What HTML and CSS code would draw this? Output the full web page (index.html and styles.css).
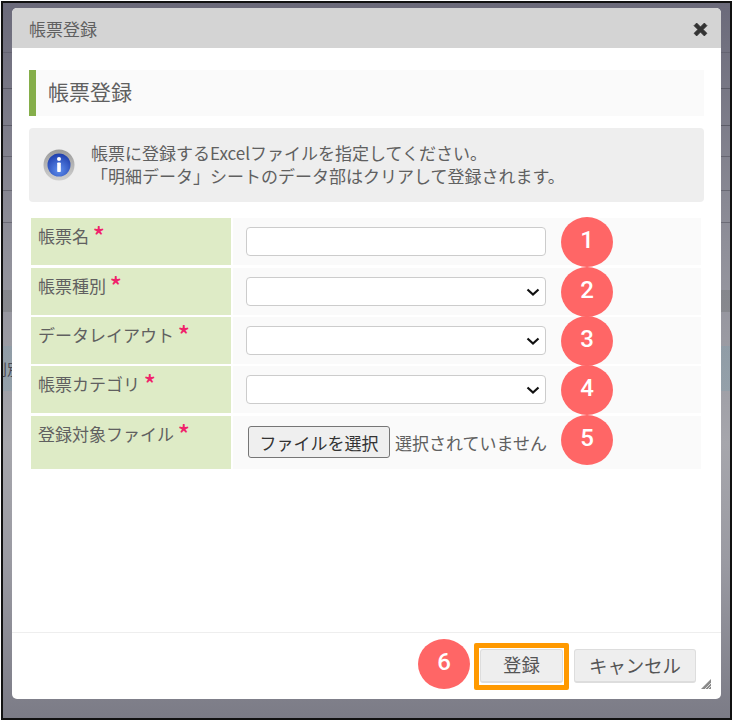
FILE: index.html
```html
<!DOCTYPE html>
<html lang="ja">
<head>
<meta charset="utf-8">
<title>帳票登録</title>
<link rel="stylesheet" href="styles.css">
</head>
<body>
<div class="frame">
  <div class="backdrop"><span class="backdrop-text">判別登録</span></div>

  <div class="dialog">
    <div class="dialog-title">
      <span>帳票登録</span>
      <svg class="close-icon" width="15" height="15" viewBox="0 0 14 14"><path d="M1 3.4 3.4 1 7 4.6 10.6 1 13 3.4 9.4 7 13 10.6 10.6 13 7 9.4 3.4 13 1 10.6 4.6 7z" fill="#333" stroke="#333" stroke-width=".8" stroke-linejoin="round"/></svg>
    </div>

    <div class="dialog-body">
      <h2 class="heading">帳票登録</h2>

      <div class="info">
        <svg class="info-icon" width="32" height="32" viewBox="0 0 32 32">
          <defs>
            <radialGradient id="blue" cx="50%" cy="72%" r="70%">
              <stop offset="0" stop-color="#5f8fee"/>
              <stop offset="1" stop-color="#1f3fae"/>
            </radialGradient>
            <linearGradient id="ring" x1="0" y1="0" x2="0" y2="1">
              <stop offset="0" stop-color="#9a9a9a"/>
              <stop offset="1" stop-color="#d0d0d0"/>
            </linearGradient>
          </defs>
          <circle cx="16" cy="16" r="15.5" fill="url(#ring)"/>
          <circle cx="16" cy="16" r="11.5" fill="url(#blue)"/>
          <circle cx="16" cy="10" r="2" fill="#fff"/>
          <rect x="14.2" y="13.5" width="3.6" height="9.5" rx=".8" fill="#fff"/>
        </svg>
        <p class="info-text">帳票に登録するExcelファイルを指定してください。<br>「明細データ」シートのデータ部はクリアして登録されます。</p>
      </div>

      <div class="form-grid">
        <div class="label">帳票名 <span class="req">*</span></div>
        <div class="value">
          <input type="text" class="field">
          <span class="badge">1</span>
        </div>

        <div class="label">帳票種別 <span class="req">*</span></div>
        <div class="value">
          <div class="select-wrap">
            <select class="field"></select>
            <svg class="chevron" width="14" height="8" viewBox="0 0 14 8"><path d="M1.5 1.5 7 6.5 12.5 1.5" fill="none" stroke="#111" stroke-width="2.2"/></svg>
          </div>
          <span class="badge">2</span>
        </div>

        <div class="label">データレイアウト <span class="req">*</span></div>
        <div class="value">
          <div class="select-wrap">
            <select class="field"></select>
            <svg class="chevron" width="14" height="8" viewBox="0 0 14 8"><path d="M1.5 1.5 7 6.5 12.5 1.5" fill="none" stroke="#111" stroke-width="2.2"/></svg>
          </div>
          <span class="badge">3</span>
        </div>

        <div class="label">帳票カテゴリ <span class="req">*</span></div>
        <div class="value">
          <div class="select-wrap">
            <select class="field"></select>
            <svg class="chevron" width="14" height="8" viewBox="0 0 14 8"><path d="M1.5 1.5 7 6.5 12.5 1.5" fill="none" stroke="#111" stroke-width="2.2"/></svg>
          </div>
          <span class="badge">4</span>
        </div>

        <div class="label">登録対象ファイル <span class="req">*</span></div>
        <div class="value value-file">
          <button type="button" class="file-btn">ファイルを選択</button>
          <span class="file-name">選択されていません</span>
          <span class="badge">5</span>
        </div>
      </div>
    </div>

    <div class="dialog-footer">
      <span class="badge badge-save">6</span>
      <div class="highlight"><button type="button" class="btn btn-save">登録</button></div>
      <button type="button" class="btn btn-cancel">キャンセル</button>
      <svg class="resize-grip" width="12" height="12" viewBox="0 0 12 12"><path d="M11 1V11H1z" fill="#8a8a8a"/><path d="M5 11 11 5M8 11 11 8" stroke="#fff" stroke-width=".7"/></svg>
    </div>
  </div>
</div>
</body>
</html>
```

FILE: styles.css
```css
* { box-sizing: border-box; }

html, body { margin: 0; height: 721px; overflow: hidden; }

body {
  padding: 1px 0 0 1px;
  background: #fff;
  font-family: "Noto Sans CJK JP", "Noto Sans", sans-serif;
  font-size: 17px;
  color: #606060;
}

.frame {
  position: relative;
  width: 731px;
  height: 719px;
  border: 2px solid #111;
  overflow: hidden;
}

.backdrop {
  height: 100%;
  padding-top: 355px;
  overflow: hidden;
  white-space: nowrap;
  color: #4a4a52;
  background:
    linear-gradient(to bottom,
      transparent 49px, rgba(60,60,70,.25) 49px, rgba(60,60,70,.25) 50px,
      transparent 50px, transparent 85px, rgba(60,60,70,.5) 85px, rgba(60,60,70,.5) 86px,
      transparent 86px, transparent 122px, rgba(60,60,70,.5) 122px, rgba(60,60,70,.5) 123px,
      transparent 123px, transparent 153px, rgba(60,60,70,.4) 153px, rgba(60,60,70,.4) 154px,
      transparent 154px, transparent 187px, rgba(60,60,70,.4) 187px, rgba(60,60,70,.4) 188px,
      transparent 188px, transparent 219px, rgba(60,60,70,.4) 219px, rgba(60,60,70,.4) 220px,
      transparent 220px, transparent 287px, rgba(90,95,90,.25) 287px, rgba(90,95,90,.25) 309px,
      transparent 309px, transparent 343px, rgba(120,160,175,.3) 343px, rgba(120,160,175,.3) 388px,
      transparent 388px),
    linear-gradient(to bottom, #6b6a7a 0, #8f8f99 240px, #a6a6ac 440px, #9a9aa2 560px, #7b7b86 717px);
}

.backdrop-text { display: block; text-indent: -11px; font-size: 15px; }

/* dialog */
.dialog {
  position: absolute;
  left: 9px;
  top: 5px;
  width: 709px;
  height: 691px;
  display: flex;
  flex-direction: column;
  background: #fff;
  border-radius: 5px;
  overflow: hidden;
}

.dialog-title {
  height: 40px;
  flex: none;
  display: flex;
  align-items: center;
  justify-content: space-between;
  padding: 0 13px 0 17px;
  background: #d4d4d4;
}

.close-icon { margin-top: 2px; }

.dialog-body {
  flex: 1;
  padding: 22px 17px 0;
}

.heading {
  margin: 0 0 12px;
  height: 46px;
  line-height: 43px;
  padding-left: 12px;
  border-left: 7px solid #85ae4a;
  background: #fafafa;
  font-size: 21px;
  font-weight: 400;
}

.info {
  height: 74px;
  display: flex;
  align-items: center;
  padding-left: 14px;
  background: #eee;
  border-radius: 4px;
}

.info-icon { flex: none; }

.info-text {
  margin: 0 0 2px 16px;
  line-height: 23px;
}

/* form */
.form-grid {
  display: grid;
  grid-template-columns: 200px 468px;
  grid-template-rows: 47px 47px 46.5px 47px 53px;
  gap: 2.5px 2px;
  margin: 16px 0 0 2px;
}

.label {
  padding: 3px 0 0 7px;
  background: #deebc6;
  line-height: 30px;
  white-space: nowrap;
}

.req {
  color: #f0226a;
  font-size: 25px;
  line-height: 20px;
  font-weight: 500;
  vertical-align: -3px;
}

.value {
  position: relative;
  display: flex;
  align-items: center;
  padding-left: 13px;
  background: #fafafa;
}

.value-file { padding-left: 15px; }

.select-wrap { position: relative; display: flex; }

.field {
  width: 300px;
  height: 29px;
  border: 1.5px solid #ccc;
  border-radius: 4px;
  background: #fff;
  font: inherit;
  appearance: none;
}

.chevron { position: absolute; right: 6px; top: 11px; }

.file-btn {
  height: 32px;
  width: 142px;
  padding: 0;
  border: 1px solid #767676;
  border-radius: 3px;
  background: #efefef;
  color: #333;
  font: inherit;
}

.file-name { margin-left: 5px; white-space: nowrap; }

.badge {
  position: absolute;
  left: 328px;
  top: -1px;
  width: 52px;
  height: 50px;
  padding-bottom: 4px;
  display: flex;
  align-items: center;
  justify-content: center;
  border-radius: 50%;
  background: #ff6666;
  color: #fff;
  font-family: Roboto, "Noto Sans", sans-serif;
  font-size: 24px;
  font-weight: 500;
}

/* footer */
.dialog-footer {
  position: relative;
  flex: none;
  display: flex;
  justify-content: flex-end;
  align-items: center;
  gap: 5px;
  height: 67px;
  padding-right: 25px;
  border-top: 1px solid #eee;
}

.badge-save { left: 406px; top: 6px; }

.highlight {
  width: 95px;
  height: 47px;
  padding: 1px 0 0 1px;
  border: 5px solid #ff9900;
  border-radius: 2px;
}

.btn {
  height: 34px;
  padding: 0 0 2px;
  border: 1px solid #ddd;
  border-bottom-width: 2px;
  border-radius: 3px;
  background: #eee;
  color: #555;
  font: inherit;
  font-size: 18.4px;
}

.btn-save { width: 83px; }
.btn-cancel { width: 122px; }

.resize-grip { position: absolute; right: 9px; bottom: 9px; }
```
